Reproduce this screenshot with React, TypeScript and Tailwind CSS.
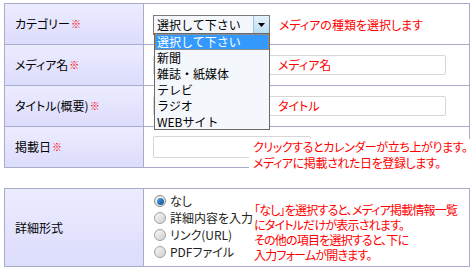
import React from "react";

const font = "[font-family:'Noto_Sans_CJK_JP','Noto_Sans_CJK_SC',sans-serif]";
const palt = "[font-feature-settings:'palt']";

function Label({ text, req = true }: { text: string; req?: boolean }) {
  return (
    <div className={`${palt} flex items-center pl-[10px] border-r border-[#aaaacc] bg-gradient-to-b from-[#ececff] to-[#dcdcfc] text-[12px] text-black leading-none`}>
      <span>{text}</span>
      {req && <span className="text-[#ff0000] text-[10px] ml-[1px]">※</span>}
    </div>
  );
}

function Radio({ on }: { on?: boolean }) {
  return on ? (
    <span className="w-[12px] h-[12px] rounded-full border border-[#8a8a8a] bg-[#f0f0f0] flex items-center justify-center">
      <span className="block w-[7px] h-[7px] rounded-full bg-gradient-to-br from-[#4aa8f0] to-[#0b4d8c]" />
    </span>
  ) : (
    <span className="inline-block w-[12px] h-[12px] rounded-full border border-[#a0a0a0] bg-gradient-to-br from-[#f8f8f8] to-[#d0d0d0]" />
  );
}

export default function App() {
  const items = ["選択して下さい", "新聞", "雑誌・紙媒体", "テレビ", "ラジオ", "WEBサイト"];
  return (
    <div className={`${font} relative w-[476px] h-[274px] bg-white pl-[4px] pt-[3px] overflow-hidden`}>
      {/* Table 1 */}
      <div className="w-[466px] border border-[#aaaacc]">
        <div className="grid grid-cols-[139px_1fr] h-[41px] border-b border-[#aaaacc]">
          <Label text="カテゴリー" />
          <div className="flex items-center pl-[9px] pt-[1px]">
            <div className="flex items-center w-[117px] h-[20px] border border-[#7a7a7a] bg-[#f4f7fb] text-[12px] leading-none">
              <span className="flex-1 pl-[3px]">選択して下さい</span>
              <span className="w-[16px] h-[18px] bg-gradient-to-b from-[#e4f2fb] to-[#b8dcf4] border-l border-[#9cc4e0] flex items-center justify-center">
                <svg width="7" height="4" viewBox="0 0 7 4"><path d="M0 0h7L3.5 4z" fill="#000" /></svg>
              </span>
            </div>
            <span className={`${palt} ml-[9px] text-[12px] text-[#ff0000] leading-none`}>メディアの種類を選択します</span>
          </div>
        </div>
        <div className="grid grid-cols-[139px_1fr] h-[41px] border-b border-[#aaaacc]">
          <Label text="メディア名" />
          <div className="flex items-center pl-[9px]">
            <div className="relative w-[293px] h-[20px] border border-[#d6d6d6] rounded-[2px] bg-white">
              <span className={`${palt} absolute left-[124px] top-[3px] text-[12px] text-[#ff0000] leading-none`}>メディア名</span>
            </div>
          </div>
        </div>
        <div className="grid grid-cols-[139px_1fr] h-[41px] border-b border-[#aaaacc]">
          <Label text="タイトル(概要)" />
          <div className="flex items-center pl-[9px]">
            <div className="relative w-[293px] h-[20px] border border-[#d6d6d6] rounded-[2px] bg-white">
              <span className={`${palt} absolute left-[124px] top-[3px] text-[12px] text-[#ff0000] leading-none`}>タイトル</span>
            </div>
          </div>
        </div>
        <div className="grid grid-cols-[139px_1fr] h-[40px]">
          <Label text="掲載日" />
          <div className="flex items-center pl-[9px]">
            <div className="w-[158px] h-[22px] border border-[#d6d6d6] rounded-[2px] bg-white" />
          </div>
        </div>
      </div>

      {/* Table 2 */}
      <div className="mt-[20px] w-[466px] h-[79px] border border-[#aaaacc] grid grid-cols-[139px_1fr]">
        <Label text="詳細形式" req={false} />
        <div className={`${palt} flex flex-col pl-[10px] pt-[6px] gap-[5px] text-[12px] leading-none`}>
          {[
            ["なし", true],
            ["詳細内容を入力", false],
            ["リンク(URL)", false],
            ["PDFファイル", false],
          ].map(([t, on]) => (
            <div key={t as string} className="flex items-center gap-[4px] h-[12px]">
              <Radio on={on as boolean} />
              <span className="text-[#222]">{t as string}</span>
            </div>
          ))}
        </div>
      </div>

      {/* Dropdown list overlay */}
      <div className="absolute left-[154px] top-[33px] w-[116px] h-[97px] border border-[#6a6a6a] bg-[#f4f7fb] text-[12px] leading-[16px]">
        {items.map((it, i) => (
          <div
            key={it}
            className={
              i === 0
                ? "h-[16px] pl-[2px] bg-[#3399ff] text-white outline outline-1 outline-dotted outline-[#e08020] -outline-offset-1"
                : "h-[16px] pl-[2px] text-black"
            }
          >
            {it}
          </div>
        ))}
      </div>

      {/* Annotation: date */}
      <div className={`${palt} absolute left-[249px] top-[139px] h-[30px] bg-white text-[12px] leading-[16px] tracking-[-0.4px] text-[#ff0000] pl-[4px] pr-[3px] whitespace-nowrap`}>
        <div>クリックするとカレンダーが立ち上がります。</div>
        <div>メディアに掲載された日を登録します。</div>
      </div>

      {/* Annotation: detail */}
      <div className={`${palt} absolute left-[254px] top-[202px] bg-white text-[12px] leading-[15px] tracking-[-0.8px] text-[#ff0000] whitespace-nowrap`}>
        <div>「なし」を選択すると、メディア掲載情報一覧</div>
        <div>にタイトルだけが表示されます。</div>
        <div>その他の項目を選択すると、下に</div>
        <div>入力フォームが開きます。</div>
      </div>
    </div>
  );
}
